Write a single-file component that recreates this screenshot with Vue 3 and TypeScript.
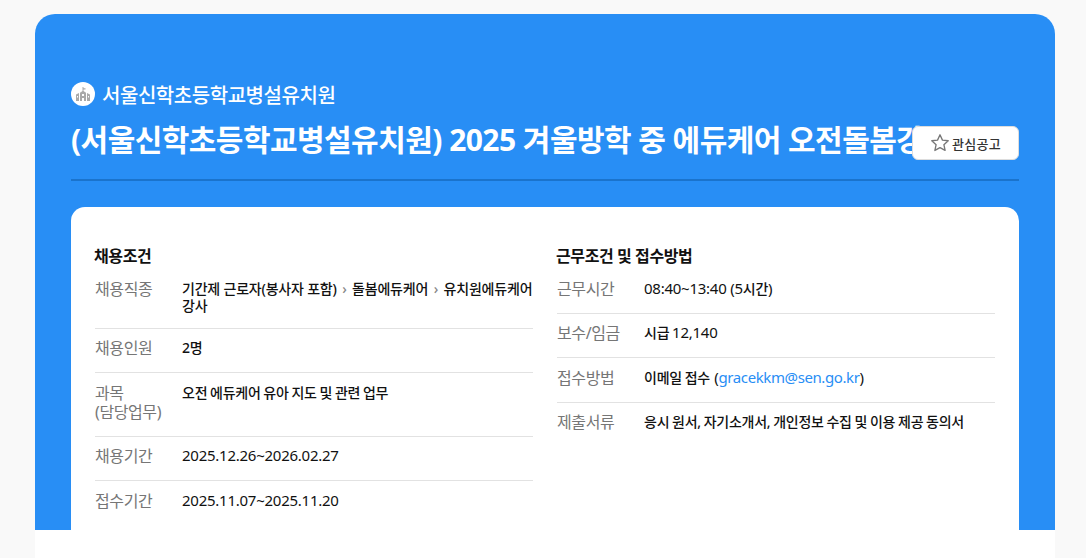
<script setup lang="ts">
type Row = { label: string; value: string; num?: boolean }

const leftRows: Row[] = [
  { label: "채용인원", value: "2명" },
  { label: "과목\n(담당업무)", value: "오전 에듀케어 유아 지도 및 관련 업무" },
  { label: "채용기간", value: "2025.12.26~2026.02.27", num: true },
  { label: "접수기간", value: "2025.11.07~2025.11.20", num: true },
]
</script>

<template>
  <div class="page">
    <main class="sheet">
      <section class="hero">
        <div class="org">
          <span class="org-logo">
            <svg width="16" height="16" viewBox="0 0 16 16">
              <path fill="#a9a9a9" d="M7.5 1h1v1.2h2v1.3h-2V5l2.5 1.8V15H5V6.8L7.5 5zM1 8.5 4 7v8H1zM12 7l3 1.5V15h-3z" />
              <path fill="#fff" d="M7 8h2v2H7zM7 12h2v3H7zM2 10h1v1.5H2zM13 10h1v1.5h-1z" />
            </svg>
          </span>
          <span>서울신학초등학교병설유치원</span>
        </div>
        <div class="title-row">
          <h1>(서울신학초등학교병설유치원) 2025 겨울방학 중 에듀케어 오전돌봄강사</h1>
          <button class="fav" type="button">
            <svg width="20" height="20" viewBox="0 0 18 18">
              <path fill="none" stroke="#777" stroke-width="1.2" stroke-linejoin="round" d="M9 1.6l2.2 4.8 5.2.6-3.9 3.5 1.1 5.2L9 13.1l-4.6 2.6 1.1-5.2L1.6 7l5.2-.6z" />
            </svg>
            관심공고
          </button>
        </div>
        <div class="card">
          <div class="col">
            <h2>채용조건</h2>
            <dl>
              <div class="row">
                <dt>채용직종</dt>
                <dd class="path">기간제 근로자(봉사자 포함)<i>›</i>돌봄에듀케어<i>›</i>유치원에듀케어 강사</dd>
              </div>
              <div v-for="r in leftRows" :key="r.label" class="row">
                <dt>{{ r.label }}</dt>
                <dd :class="{ num: r.num }">{{ r.value }}</dd>
              </div>
            </dl>
          </div>
          <div class="col">
            <h2>근무조건 및 접수방법</h2>
            <dl>
              <div class="row">
                <dt>근무시간</dt>
                <dd><span class="num">08:40~13:40 (5</span>시간<span class="num">)</span></dd>
              </div>
              <div class="row">
                <dt>보수/임금</dt>
                <dd>시급 <span class="num">12,140</span></dd>
              </div>
              <div class="row">
                <dt>접수방법</dt>
                <dd>이메일 접수 <span class="num mail">(<a href="#">gracekkm@sen.go.kr</a>)</span></dd>
              </div>
              <div class="row">
                <dt>제출서류</dt>
                <dd>응시 원서, 자기소개서, 개인정보 수집 및 이용 제공 동의서</dd>
              </div>
            </dl>
          </div>
        </div>
      </section>
    </main>
  </div>
</template>

<style>
html, body {
  margin: 0;
  height: 100%;
  overflow: hidden;
  background: #f9f9f9;
}
</style>

<style scoped>
.page {
  height: 558px;
  padding: 14px 31px 0 35px;
  box-sizing: border-box;
  overflow: hidden;
  font-family: "Noto Sans", "Noto Sans CJK KR", sans-serif;
}

.sheet {
  height: 544px;
  background: #fff;
  border-radius: 20px 20px 0 0;
}

.hero {
  height: 516px;
  padding: 65px 36px 0;
  box-sizing: border-box;
  background: #288ef5;
  border-radius: 20px 20px 0 0;
}

.org {
  display: flex;
  align-items: center;
  gap: 7px;
  height: 30px;
  color: #fff;
  font-size: 20px;
  font-weight: 500;
  letter-spacing: -0.45px;
}

.org-logo {
  width: 24px;
  height: 24px;
  border-radius: 50%;
  background: #fff;
  display: flex;
  align-items: center;
  justify-content: center;
}

.title-row {
  position: relative;
  margin-top: 9px;
  padding-bottom: 17px;
  border-bottom: 2px solid #1a73cc;
}

h1 {
  margin: 0 90px 0 0;
  height: 44px;
  color: #fff;
  font-size: 30px;
  line-height: 44px;
  font-weight: 700;
  letter-spacing: -0.55px;
  white-space: nowrap;
  overflow: hidden;
}

.fav {
  position: absolute;
  right: 0;
  top: 8px;
  width: 107px;
  height: 34px;
  padding: 0;
  display: flex;
  align-items: center;
  justify-content: center;
  gap: 2px;
  background: #fff;
  border: 1px solid #ddd;
  border-radius: 6px;
  color: #333;
  font-family: inherit;
  font-size: 13px;
  font-weight: 500;
  letter-spacing: 0.3px;
}

.card {
  margin-top: 26px;
  padding: 37px 24px 0;
  height: 400px;
  box-sizing: border-box;
  display: grid;
  grid-template-columns: 1fr 1fr;
  column-gap: 24px;
  background: #fff;
  border-radius: 14px;
}

h2 {
  margin: 0 0 1px -1px;
  font-size: 16px;
  line-height: 24px;
  font-weight: 700;
  color: #111;
  letter-spacing: -0.4px;
}

dl {
  margin: 0;
}

.row {
  display: flex;
  padding: 10.5px 0 14px;
  border-bottom: 1px solid #e2e2e2;
}

.row:last-child {
  border-bottom: 0;
}

dt {
  flex: 0 0 87px;
  color: #767676;
  font-size: 16px;
  line-height: 19px;
  letter-spacing: -0.4px;
  white-space: pre-line;
}

dd {
  margin: 0;
  flex: 1;
  color: #111;
  font-size: 14px;
  line-height: 17px;
  font-weight: 500;
  letter-spacing: -0.25px;
  word-spacing: -0.6px;
}

.num {
  font-size: 15px;
  font-weight: 400;
  letter-spacing: -0.25px;
  word-spacing: 0;
}

.mail {
  margin-left: 1.5px;
}

.path {
  letter-spacing: -0.2px;
  word-spacing: 0;
}

dd i {
  font-style: normal;
  color: #888;
  margin: 0 5.5px;
}

dd a {
  color: #288ef5;
  text-decoration: none;
  letter-spacing: -0.4px;
}
</style>
